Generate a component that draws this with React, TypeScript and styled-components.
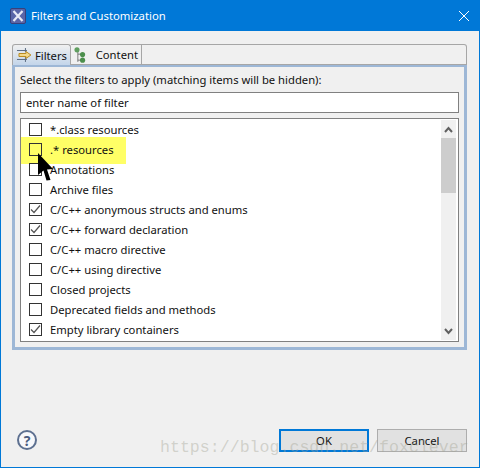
import styled, { createGlobalStyle } from "styled-components"

const GlobalStyle = createGlobalStyle`
html, body {
    margin: 0;
    padding: 0;
    background: #f0f0f0;
}
* {
    box-sizing: border-box;
}
`;

const filters = [
    { label: "*.class resources", checked: false },
    { label: ".* resources", checked: false },
    { label: "Annotations", checked: false },
    { label: "Archive files", checked: false },
    { label: "C/C++ anonymous structs and enums", checked: true },
    { label: "C/C++ forward declaration", checked: true },
    { label: "C/C++ macro directive", checked: false },
    { label: "C/C++ using directive", checked: false },
    { label: "Closed projects", checked: false },
    { label: "Deprecated fields and methods", checked: false },
    { label: "Empty library containers", checked: true },
]

const App = () => {
    return (
        <>
            <GlobalStyle />
            <Window>
                <TitleBar>
                    <AppIcon width="16" height="16" viewBox="0 0 16 16">
                        <rect x="0.5" y="0.5" width="15" height="15" rx="1.5" fill="#5a66a8" stroke="#39407a" />
                        <path d="M3.5 3 L12.5 13 M12.5 3 L3.5 13" stroke="#e8eaf6" strokeWidth="2.2" />
                    </AppIcon>
                    <Title>Filters and Customization</Title>
                    <CloseIcon width="10" height="10" viewBox="0 0 10 10">
                        <path d="M0 0 L10 10 M10 0 L0 10" stroke="#fff" strokeWidth="1" />
                    </CloseIcon>
                </TitleBar>
                <Body>
                    <TabBar>
                        <Tab $active>
                            <svg width="16" height="16" viewBox="0 0 16 16">
                                <path d="M1 3.5 H11 M1 12.5 H11 M9.5 1 V5 M9.5 10 V15" stroke="#5b6b80" strokeWidth="1" fill="none" />
                                <path d="M3 6.5 H10 V4.5 L15 8 L10 11.5 V9.5 H3 Z" fill="#f4d98a" stroke="#b98a1e" strokeWidth="1" />
                            </svg>
                            Filters
                        </Tab>
                        <Tab>
                            <svg width="16" height="20" viewBox="0 0 16 20">
                                <path d="M4.5 4 V18 M4.5 9 H10 M4.5 16 H10" stroke="#6b6b6b" strokeWidth="1" fill="none" />
                                <circle cx="3.5" cy="4" r="3" fill="#5f9e5f" />
                                <circle cx="10" cy="9.5" r="3" fill="#4c8f4c" />
                                <circle cx="10" cy="16" r="3" fill="#4c8f4c" />
                            </svg>
                            <TabLabel>Content</TabLabel>
                        </Tab>
                        <TabFill />
                    </TabBar>
                    <Panel>
                        <Prompt>Select the filters to apply (matching items will be hidden):</Prompt>
                        <SearchInput readOnly value="enter name of filter" />
                        <ListBox>
                            <Rows>
                                <Highlight />
                                {filters.map((item) => (
                                    <Row key={item.label}>
                                        <CheckBox>
                                            {item.checked && (
                                                <svg width="11" height="11" viewBox="0 0 11 11">
                                                    <path d="M1 5.5 L4 8.5 L10 1.5" stroke="#555" strokeWidth="1.2" fill="none" />
                                                </svg>
                                            )}
                                        </CheckBox>
                                        <RowLabel>{item.label}</RowLabel>
                                    </Row>
                                ))}
                                <Pointer width="18" height="30" viewBox="0 0 18 30">
                                    <path d="M0 0 L15 16 L9 16.5 L12.5 27 L8.5 27.5 L5.5 17.5 L0 22 Z" fill="#000" />
                                </Pointer>
                            </Rows>
                            <ScrollBar>
                                <ScrollArrow>
                                    <svg width="9" height="7" viewBox="0 0 9 7">
                                        <path d="M1 6 L4.5 2 L8 6" stroke="#606060" strokeWidth="2" fill="none" />
                                    </svg>
                                </ScrollArrow>
                                <ScrollThumb />
                                <ScrollTrack />
                                <ScrollArrow>
                                    <svg width="9" height="7" viewBox="0 0 9 7">
                                        <path d="M1 1 L4.5 5 L8 1" stroke="#606060" strokeWidth="2" fill="none" />
                                    </svg>
                                </ScrollArrow>
                            </ScrollBar>
                        </ListBox>
                    </Panel>
                    <Footer>
                        <HelpButton>?</HelpButton>
                        <FooterButtons>
                            <Button $primary>OK</Button>
                            <Button>Cancel</Button>
                        </FooterButtons>
                    </Footer>
                </Body>
                <Watermark>https://blog.csdn.net/foxclever</Watermark>
            </Window>
        </>
    )
}

export default App

const Window = styled.div`
width: 480px;
height: 468px;
position: relative;
overflow: hidden;
display: flex;
flex-direction: column;
background-color: #f0f0f0;
border: 1px solid #0078d7;
border-top: none;
font-family: "Noto Sans", "Liberation Sans", sans-serif;
font-size: 11.25px;
color: #111;
`;
const TitleBar = styled.div`
height: 31px;
flex-shrink: 0;
margin: 0 -1px;
padding: 0 11px 0 10px;
display: flex;
align-items: center;
background-color: #0078d7;
color: #fff;
`;
const AppIcon = styled.svg`
flex-shrink: 0;
`;
const Title = styled.div`
margin-left: 5px;
flex: 1;
font-size: 11.3px;
`;
const CloseIcon = styled.svg`
flex-shrink: 0;
`;
const Body = styled.div`
flex: 1;
display: flex;
flex-direction: column;
padding: 13px 12px 15px 11px;
`;
const TabBar = styled.div`
height: 21px;
display: flex;
`;
const Tab = styled.div<{ $active?: boolean }>`
height: 21px;
display: flex;
align-items: center;
gap: 3px;
padding: 0 3px;
width: ${(p) => (p.$active ? "59px" : "71px")};
border: 1px solid #a6a6a6;
border-left: ${(p) => (p.$active ? "1px solid #a6a6a6" : "none")};
border-radius: ${(p) => (p.$active ? "3px 3px 0 0" : "0")};
border-bottom: ${(p) => (p.$active ? "none" : "1px solid #a6a6a6")};
background: ${(p) => (p.$active ? "linear-gradient(#f0f0f0, #c3d5ea)" : "#f0f0f0")};
`;
const TabLabel = styled.span`
margin-left: 5px;
`;
const TabFill = styled.div`
flex: 1;
border-top: 1px solid #a6a6a6;
border-right: 1px solid #a6a6a6;
border-bottom: 1px solid #a6a6a6;
border-radius: 0 3px 0 0;
`;
const Panel = styled.div`
height: 285px;
padding: 3px 5px 5px 5px;
display: flex;
flex-direction: column;
border: 3px solid #9db7d6;
border-top-width: 2px;
`;
const Prompt = styled.div`
height: 22px;
line-height: 20px;
`;
const SearchInput = styled.input`
height: 21px;
padding: 0 5px;
border: 1px solid #808080;
outline: none;
background: #fff;
font: inherit;
color: #111;
`;
const ListBox = styled.div`
margin-top: 5px;
height: 224px;
display: flex;
padding: 0 2px 1px 1px;
border: 1px solid #808080;
background: #fff;
`;
const Rows = styled.div`
flex: 1;
position: relative;
`;
const Highlight = styled.div`
position: absolute;
left: -1px;
top: 18px;
width: 105px;
height: 27px;
background: #ffff66;
`;
const Row = styled.div`
height: 20px;
position: relative;
display: flex;
align-items: center;
padding-left: 7px;
`;
const CheckBox = styled.div`
width: 13px;
height: 13px;
display: flex;
align-items: center;
justify-content: center;
border: 1px solid #333;
`;
const RowLabel = styled.span`
margin-left: 8px;
`;
const Pointer = styled.svg`
position: absolute;
left: 16px;
top: 34px;
`;
const ScrollBar = styled.div`
width: 15px;
margin-top: 1px;
display: flex;
flex-direction: column;
background: #f0f0f0;
`;
const ScrollArrow = styled.div`
height: 18px;
display: flex;
align-items: center;
justify-content: center;
`;
const ScrollThumb = styled.div`
height: 55px;
background: #cdcdcd;
`;
const ScrollTrack = styled.div`
flex: 1;
`;
const Footer = styled.div`
flex: 1;
display: flex;
align-items: flex-end;
justify-content: space-between;
padding-left: 5px;
`;
const HelpButton = styled.div`
width: 20px;
height: 20px;
margin-bottom: 2px;
display: flex;
align-items: center;
justify-content: center;
border: 2px solid #5d7090;
border-radius: 50%;
background: #f7f8fb;
color: #4a5d80;
font-weight: 700;
font-size: 14px;
`;
const FooterButtons = styled.div`
display: flex;
gap: 8px;
`;
const Button = styled.div<{ $primary?: boolean }>`
width: 90px;
height: 23px;
display: flex;
align-items: center;
justify-content: center;
background: #e1e1e1;
border: ${(p) => (p.$primary ? "2px solid #0078d7" : "1px solid #adadad")};
`;
const Watermark = styled.div`
position: absolute;
left: 159px;
top: 438px;
font-family: "Liberation Mono", monospace;
font-size: 16.6px;
line-height: 20px;
white-space: nowrap;
color: rgba(165, 165, 150, 0.42);
`;
